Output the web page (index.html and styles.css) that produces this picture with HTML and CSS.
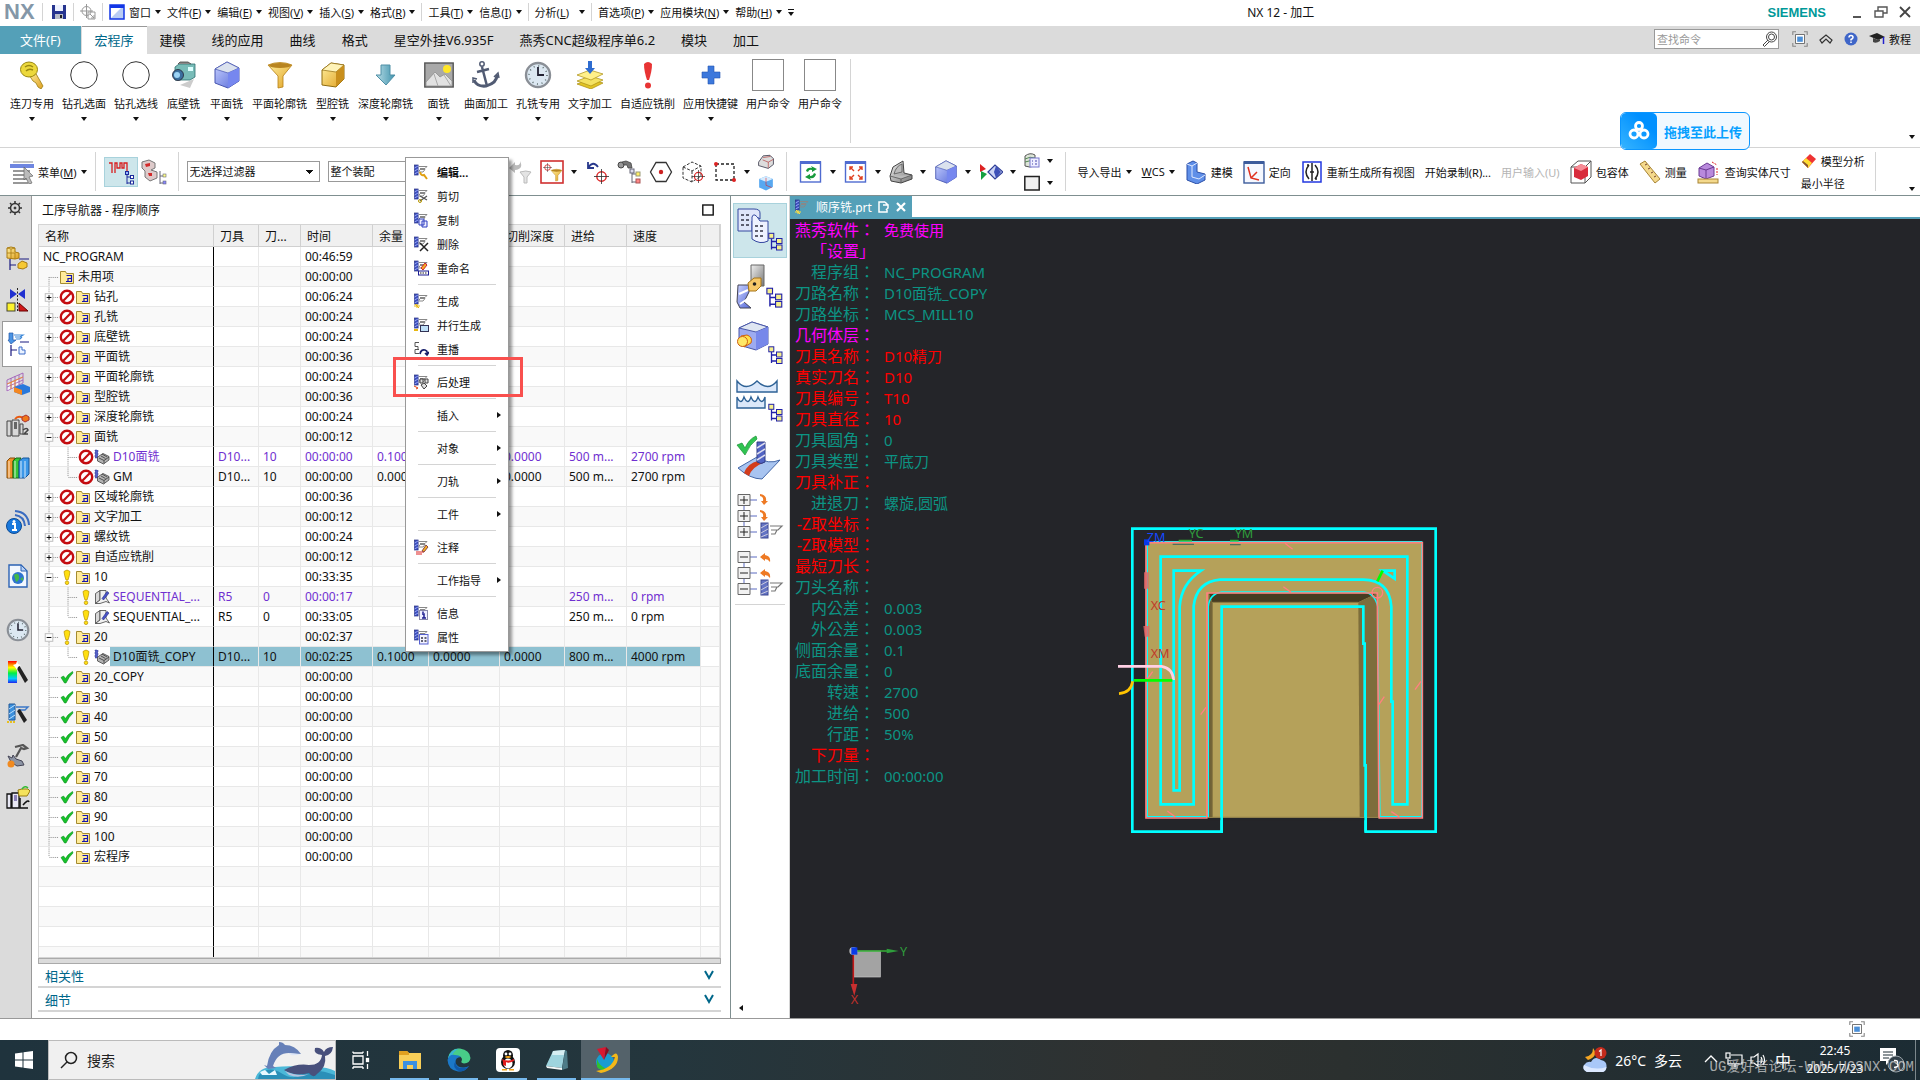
FILE: index.html
```html
<!DOCTYPE html>
<html lang="zh-CN">
<head>
  <meta charset="UTF-8">
  <meta name="viewport" content="width=device-width, initial-scale=1.0">
  <title>NX 12 - 加工</title>
  <link rel="stylesheet" href="styles.css">
</head>
<body>

  <!-- shared icons -->
  <svg class="sprite" width="0" height="0" aria-hidden="true">
    <defs>
      <linearGradient id="gBlue" x1="0" y1="0" x2="1" y2="1"><stop offset="0" stop-color="#c9d2ff"/><stop offset="1" stop-color="#5468d8"/></linearGradient>
      <linearGradient id="gGold" x1="0" y1="0" x2="1" y2="1"><stop offset="0" stop-color="#fff0a0"/><stop offset="1" stop-color="#e0a020"/></linearGradient>
      <linearGradient id="gGray" x1="0" y1="0" x2="1" y2="1"><stop offset="0" stop-color="#f0f0f0"/><stop offset="1" stop-color="#777"/></linearGradient>
      <linearGradient id="gTeal" x1="0" y1="0" x2="1" y2="0"><stop offset="0" stop-color="#b8dce6"/><stop offset="1" stop-color="#3f93ad"/></linearGradient>
      <linearGradient id="gRain" x1="0" y1="0" x2="0" y2="1"><stop offset="0" stop-color="#f00"/><stop offset=".3" stop-color="#ff0"/><stop offset=".55" stop-color="#0e4"/><stop offset=".8" stop-color="#0cf"/><stop offset="1" stop-color="#22e"/></linearGradient>
    </defs>

    <!-- tree guides -->
    <symbol id="g-plus" viewBox="0 0 20 20"><path d="M9.5 0V6M9.5 15V20M14 10.500H19" class="dots"/><rect x="5.500" y="6.500" width="8" height="8" class="box"/><path d="M7 10.500H12M9.500 8V13" class="sign"/></symbol>
    <symbol id="g-minus" viewBox="0 0 20 20"><path d="M9.5 0V6M9.5 15V20M14 10.500H19" class="dots"/><rect x="5.500" y="6.500" width="8" height="8" class="box"/><path d="M7 10.500H12" class="sign"/></symbol>
    <symbol id="g-tee" viewBox="0 0 20 20"><path d="M9.5 0V20M10 10.500H19" class="dots"/></symbol>
    <symbol id="g-first" viewBox="0 0 20 20"><path d="M9.5 10V20M10 10.500H19" class="dots"/></symbol>
    <symbol id="g-end" viewBox="0 0 20 20"><path d="M9.5 0V10M10 10.500H19" class="dots"/></symbol>
    <symbol id="g-pass" viewBox="0 0 20 20"><path d="M9.5 0V20" class="dots"/></symbol>

    <!-- tree status and nodes -->
    <symbol id="no" viewBox="0 0 16 16"><circle cx="8" cy="8" r="6.200" fill="#fff" stroke="#c40c10" stroke-width="2.400"/><path d="M3.800 12.200L12.200 3.800" stroke="#c40c10" stroke-width="2.200"/></symbol>
    <symbol id="warn" viewBox="0 0 16 16"><path d="M5 2.500Q8 -.5 11 2.500Q10.500 7 9 11H7Q5.500 7 5 2.500Z" fill="#ffdf10" stroke="#b89000" stroke-width=".7"/><circle cx="8" cy="13.800" r="1.800" fill="#ffdf10" stroke="#b89000" stroke-width=".7"/></symbol>
    <symbol id="ok" viewBox="0 0 16 16"><path d="M2 8.500L4.500 7L6.500 9.500Q9 5 13.500 2.500L14 4Q10 7.500 7 14H5.500Z" fill="#17c22c" stroke="#0c8d1c" stroke-width=".6"/></symbol>
    <symbol id="folder" viewBox="0 0 16 16"><path d="M1.500 14.500V2.500H6.500L7.500 4.500H14.500V14.500Z" fill="#ffeb9a" stroke="#a48b30"/><path d="M7.500 6.500H12.500V9.500H9V12.500M12.500 9V12.500H7" fill="none" stroke="#1414b4" stroke-width="1.200"/></symbol>
    <symbol id="opface" viewBox="0 0 16 16"><path d="M1 1H4V9H1Z" fill="#5560c4" stroke="#333a90" stroke-width=".5" stroke-dasharray="2 1"/><path d="M3.500 8L9 4.500L15 7.500V11L9.500 15L3.500 12Z" fill="#b4b4b4" stroke="#444" stroke-width=".8"/><path d="M5 9L10 11.500L15 8M7 7L11.500 9.500M10 11.500V14.500M8 5L13 8" fill="none" stroke="#444" stroke-width=".9"/></symbol>
    <symbol id="opseq" viewBox="0 0 16 16"><path d="M1.500 4.500L6 1.500V11L1.500 14.500Z" fill="#d8d8d8" stroke="#444" stroke-width=".8"/><path d="M6 1.500H12V9L15.500 14L12 12.500L6 14.500H1.500L6 11Z" fill="#f0f0f0" stroke="#444" stroke-width=".8"/><path d="M8 9.500L13 2.500L15 4L9.500 11Z" fill="#4a55c8" stroke="#1e2780" stroke-width=".6"/></symbol>

    <!-- mill tool base used across operation icons -->
    <symbol id="mill" viewBox="0 0 16 16"><rect x="1.500" y="1" width="3.600" height="10" fill="#3d50c0" stroke="#262f80" stroke-width=".7"/><path d="M1.500 4L5 2M1.500 7L5 5M1.500 10L5 8" stroke="#aab6ff" stroke-width=".8"/><path d="M6 2.500H14L12 4.500H7M6 7.500L7 5.500H12L10 8H6" fill="none" stroke="#888"/></symbol>
    <symbol id="nodes" viewBox="0 0 16 18"><path d="M3.500 6V17M3.500 9H8M3.500 15H8" fill="none" stroke="#2222a8" stroke-width="1.300"/><rect x=".8" y=".8" width="5" height="5" class="node"/><rect x="8.500" y="6" width="5.500" height="5" class="node"/><rect x="8.500" y="12.500" width="5.500" height="5" class="node"/></symbol>

    <!-- cubes and common shapes -->
    <symbol id="cube-blue" viewBox="0 0 28 28"><path d="M2 8L14 1L26 7V20L15 27L2 22Z" fill="url(#gBlue)" stroke="#4655b0"/><path d="M2 8L15 12L26 7L14 1Z" fill="#dbe2ee" stroke="#4655b0" stroke-width=".7"/><path d="M15 12V27L26 20V7Z" fill="#7687ef"/></symbol>
    <symbol id="cube-gold" viewBox="0 0 28 28"><path d="M3 9L12 2L25 4V18L17 26L3 24Z" fill="url(#gGold)" stroke="#8f6c10"/><path d="M3 9L12 2L25 4L17 11Z" fill="#fff3b8" stroke="#8f6c10" stroke-width=".7"/><path d="M17 11V26L25 18V4Z" fill="#c98f1c"/></symbol>
    <symbol id="clock" viewBox="0 0 28 28"><circle cx="14" cy="14" r="12" fill="#dce8f2" stroke="#8a8f96" stroke-width="2.400"/><circle cx="14" cy="14" r="9" fill="none" stroke="#566" stroke-dasharray="1 3.710" stroke-width="1.500"/><path d="M14 6V14H20" fill="none" stroke="#223" stroke-width="1.800"/></symbol>
    <symbol id="target" viewBox="0 0 16 16"><circle cx="8" cy="8" r="5" fill="none" stroke="#d22" stroke-width="1.500"/><path d="M8 0V16M0 8H16" stroke="#333" stroke-width=".9"/></symbol>
    <symbol id="funnel" viewBox="0 0 28 28"><path d="M2 4Q14 -1 26 4L17 15V26L12 27V15Z" fill="url(#gGold)" stroke="#b57d12" stroke-width=".8"/><ellipse cx="14" cy="4.500" rx="11" ry="2.500" fill="#b88420"/></symbol>
    <symbol id="fit" viewBox="0 0 20 20"><path d="M1 5V1H5M15 1H19V5M19 15V19H15M5 19H1V15" fill="none" stroke="#888" stroke-width="1.400"/><rect x="4.500" y="4.500" width="11" height="11" fill="#fff" stroke="#555"/><rect x="6.500" y="7" width="7" height="6.500" fill="#4b8fd8"/></symbol>
  </svg>

  <header class="titlebar">
    <span class="nx-logo">NX</span>
    <span class="sep"></span>
    <button class="plain" aria-label="保存"><svg width="16" height="16" viewBox="0 0 16 16"><path d="M1 1H15V15H1Z" fill="#26348f"/><rect x="4" y="1" width="8" height="6" fill="#eef2ff"/><rect x="4" y="10" width="8" height="5" fill="#b7bcc8"/><rect x="9" y="11" width="2" height="3" fill="#222"/></svg></button>
    <span class="sep"></span>
    <button class="plain" aria-label="选择"><svg width="16" height="16" viewBox="0 0 16 16" fill="none" stroke="#999"><circle cx="6.500" cy="7" r="4.500"/><path d="M6.500 0V14M0 7H13M8 8H15V15H8ZM10 10L14 14M14 11V14H11"/></svg></button>
    <span class="sep"></span>
    <button class="menu-btn"><svg width="16" height="16" viewBox="0 0 16 16"><rect x="1" y="1" width="14" height="14" fill="#b9ccf4" stroke="#1236e6" stroke-width="1.500"/><rect x="1" y="1" width="14" height="3" fill="#1236e6"/><path d="M2 4H12L2 14Z" fill="#fff"/></svg>窗口<i class="caret"></i></button>
    <button class="menu-btn"><span>文件(<u>F</u>)</span><i class="caret"></i></button>
    <button class="menu-btn"><span>编辑(<u>E</u>)</span><i class="caret"></i></button>
    <button class="menu-btn"><span>视图(<u>V</u>)</span><i class="caret"></i></button>
    <button class="menu-btn"><span>插入(<u>S</u>)</span><i class="caret"></i></button>
    <button class="menu-btn"><span>格式(<u>R</u>)</span><i class="caret"></i></button>
    <span class="sep"></span>
    <button class="menu-btn"><span>工具(<u>T</u>)</span><i class="caret"></i></button>
    <button class="menu-btn"><span>信息(<u>I</u>)</span><i class="caret"></i></button>
    <span class="sep"></span>
    <button class="menu-btn wide"><span>分析(<u>L</u>)</span><i class="caret"></i></button>
    <span class="sep"></span>
    <button class="menu-btn"><span>首选项(<u>P</u>)</span><i class="caret"></i></button>
    <button class="menu-btn"><span>应用模块(<u>N</u>)</span><i class="caret"></i></button>
    <button class="menu-btn"><span>帮助(<u>H</u>)</span><i class="caret"></i></button>
    <button class="plain more" aria-label="更多"><i class="bar"></i><i class="caret"></i></button>
    <h1 class="app-title">NX 12 - 加工</h1>
    <span class="brand">SIEMENS</span>
    <div class="win-btns">
      <button class="plain" aria-label="最小化"><svg width="14" height="14" viewBox="0 0 14 14"><path d="M3 12H11" stroke="#555" stroke-width="2"/></svg></button>
      <button class="plain" aria-label="还原"><svg width="14" height="14" viewBox="0 0 14 14" fill="none" stroke="#555" stroke-width="1.400"><path d="M1 6H9V12H1ZM4 6V2H13V8H9"/></svg></button>
      <button class="plain" aria-label="关闭"><svg width="14" height="14" viewBox="0 0 14 14"><path d="M2 2L12 12M12 2L2 12" stroke="#444" stroke-width="1.800"/></svg></button>
    </div>
  </header>

  <nav class="tabs">
    <button class="tab file">文件(F)</button>
    <button class="tab active">宏程序</button>
    <button class="tab">建模</button>
    <button class="tab">线的应用</button>
    <button class="tab">曲线</button>
    <button class="tab">格式</button>
    <button class="tab">星空外挂V6.935F</button>
    <button class="tab">燕秀CNC超级程序单6.2</button>
    <button class="tab">模块</button>
    <button class="tab">加工</button>
    <div class="tab-tools">
      <label class="finder">
        <input type="text" placeholder="查找命令" aria-label="查找命令">
        <svg width="16" height="16" viewBox="0 0 16 16" fill="none" stroke="#444"><circle cx="9.500" cy="6" r="5"/><circle cx="9.500" cy="6" r="3"/><path d="M6 9L1 14L2.500 15.500L7.500 10.500"/></svg>
      </label>
      <button class="plain" aria-label="全屏"><svg width="16" height="16"><use href="#fit"/></svg></button>
      <button class="plain" aria-label="最小化功能区"><svg width="14" height="14" viewBox="0 0 14 14" fill="none" stroke="#333" stroke-width="1.200"><path d="M1 8L7 3L13 8L11 11L7 7L3 11Z"/></svg></button>
      <button class="plain" aria-label="帮助"><svg width="14" height="14" viewBox="0 0 14 14"><circle cx="7" cy="7" r="6.500" fill="#3f66c8"/><path d="M5 5.500Q5 3.500 7 3.500T9 5.500Q9 6.500 7 7.500V8.500M7 9.500V11" fill="none" stroke="#fff" stroke-width="1.500"/></svg></button>
      <button class="plain tutorial"><svg width="16" height="14" viewBox="0 0 16 14"><path d="M0 4L8 1L16 5L9 8Z" fill="#222"/><path d="M4 6V10Q7 12 11 9V7L9 8Z" fill="#444"/><path d="M14.500 5V12" stroke="#22c" stroke-width="1.500"/></svg>教程</button>
    </div>
  </nav>

  <section class="ribbon">
    <button class="cmd"><svg viewBox="0 0 28 28"><path d="M11 14L17 11L25 25L23 28L20 26L18 22L15 20Z" fill="url(#gGold)" stroke="#9a7d10" stroke-width=".8"/><ellipse cx="11" cy="8.500" rx="8.500" ry="7.500" fill="#ecd83c" stroke="#9a8810"/><path d="M7 6Q11 3 15 6M8 10Q11 7 15 9" fill="none" stroke="#9a8810" stroke-width="1.500"/></svg>连刀专用<i class="caret"></i></button>
    <button class="cmd"><svg viewBox="0 0 28 28"><circle cx="14" cy="14" r="13.300" fill="#fff" stroke="#333"/></svg>钻孔选面<i class="caret"></i></button>
    <button class="cmd"><svg viewBox="0 0 28 28"><circle cx="14" cy="14" r="13.300" fill="#fff" stroke="#333"/></svg>钻孔选线<i class="caret"></i></button>
    <button class="cmd"><svg viewBox="0 0 28 28"><path d="M10 24L24 18L20 27Z" fill="#ccc"/><path d="M5 6L9 3H25V16L20 19H5Z" fill="#78bcb8" stroke="#2d6f70" stroke-width=".8"/><path d="M8 3L10 1H18L21 3" fill="#888" stroke="#444" stroke-width=".8"/><circle cx="8" cy="14" r="5.500" fill="#3b6f9e" stroke="#223" stroke-width=".8"/><circle cx="7" cy="14" r="3" fill="#9cd3f5"/><rect x="18" y="6" width="5" height="4" fill="#dff"/></svg>底壁铣<i class="caret"></i></button>
    <button class="cmd"><svg><use href="#cube-blue"/></svg>平面铣<i class="caret"></i></button>
    <button class="cmd"><svg><use href="#funnel"/></svg>平面轮廓铣<i class="caret"></i></button>
    <button class="cmd"><svg><use href="#cube-gold"/></svg>型腔铣<i class="caret"></i></button>
    <button class="cmd"><svg viewBox="0 0 28 28"><path d="M9 4H18V14H23L14 24L4 14H9Z" fill="url(#gTeal)" stroke="#4f8fa6"/></svg>深度轮廓铣<i class="caret"></i></button>
    <button class="cmd"><svg class="pic" viewBox="0 0 30 28"><rect x=".8" y="2" width="28.400" height="24" fill="#a9a9a9" stroke="#555" stroke-width="1.400"/><circle cx="23" cy="8" r="4" fill="#ffe628"/><path d="M2 25V21L11 11L16 16L21 13L28 20V25Z" fill="#e2e2e2" stroke="#888" stroke-width=".7"/><path d="M10 13L14 25M20 14L27 25" stroke="#aaa"/></svg>面铣<i class="caret"></i></button>
    <button class="cmd"><svg viewBox="0 0 28 28" fill="none" stroke="#515b73"><circle cx="10" cy="3" r="2.200" stroke-width="1.500"/><path d="M10 6L15 25M5 11L17 8" stroke-width="2.500"/><path d="M2 19Q5 26 14 25Q25 22 25 14" stroke-width="3"/><path d="M1 22V17L5 18M22 16L26 12L27 17" stroke-width="1.500"/></svg>曲面加工<i class="caret"></i></button>
    <button class="cmd"><svg><use href="#clock"/></svg>孔铣专用<i class="caret"></i></button>
    <button class="cmd"><svg viewBox="0 0 28 28"><path d="M1 23L14 18L27 22L15 28Z" fill="#e2c425" stroke="#a98c10" stroke-width=".7"/><path d="M1 20L14 15L27 19L15 25Z" fill="#f4e263" stroke="#a98c10" stroke-width=".7"/><path d="M1 14L14 9L27 13L15 19Z" fill="#fff08a" stroke="#a98c10" stroke-width=".7"/><path d="M12 0H16V7H19L14 13L9 7H12Z" fill="#2e6cd0"/></svg>文字加工<i class="caret"></i></button>
    <button class="cmd"><svg viewBox="0 0 28 28"><path d="M10 3Q14 -1 18 3Q18 10 15 19H13Q10 10 10 3Z" fill="#e83434"/><circle cx="14" cy="24.500" r="3" fill="#e83434"/></svg>自适应铣削<i class="caret"></i></button>
    <button class="cmd"><svg viewBox="0 0 28 28"><path d="M11 5H17V11H23V17H17V23H11V17H5V11H11Z" fill="#3c78dc" stroke="#2456b4" stroke-width=".6"/></svg>应用快捷键<i class="caret"></i></button>
    <button class="cmd user"><span class="blank"></span>用户命令</button>
    <button class="cmd user"><span class="blank"></span>用户命令</button>
    <span class="sep"></span>
    <i class="caret corner"></i>
  </section>

  <section class="toolbar">
    <button class="text-btn menu-main"><svg width="24" height="24" viewBox="0 0 24 24"><path d="M3 2H23" stroke="#888"/><rect x="0" y="4" width="24" height="4" fill="#6f86e0"/><path d="M3 11H20M3 15H18M3 19H18M3 23H18" stroke="#777" stroke-width="1.300"/><path d="M14 7L23 16L19 17L22 23L19 24L16 18L14 20Z" fill="#bbb" stroke="#666" stroke-width=".7"/></svg><span>菜单(<u>M</u>)</span><i class="caret"></i></button>
    <span class="sep"></span>
    <button class="plain toggle on" aria-label="程序顺序视图"><svg width="28" height="26" viewBox="0 0 28 26"><path d="M2 4H5V14M8 14V4H10V9H13V4H15V9H17V4H20V13" fill="none" stroke="#d81e1e" stroke-width="1.300"/><path d="M20 14V25M20 18H24M20 24H24" stroke="#1c2a9c" fill="none"/><rect x="18.500" y="12.500" width="3" height="3" fill="#9bf" stroke="#1c2a9c"/><rect x="23.500" y="16.500" width="3" height="3" fill="#fff" stroke="#1c2a9c"/><rect x="23.500" y="22" width="3" height="3" fill="#fff" stroke="#1c2a9c"/></svg></button>
    <button class="plain toggle" aria-label="几何视图"><svg width="26" height="26" viewBox="0 0 26 26"><path d="M1 3L8 1L14 4V9L10 11L16 13V19L9 22L4 18V12L1 9Z" fill="#ddcaca" stroke="#777"/><path d="M4 5L9 4V7L5 8Z" fill="#d22b2b"/><path d="M7 14L11 14V17L8 17Z" fill="#d22b2b"/><path d="M19 12V25M19 17H24M19 24H24" stroke="#667" fill="none"/><rect x="22" y="15" width="3" height="3" fill="#ff8" stroke="#667" stroke-width=".6"/><rect x="22" y="22" width="3" height="3" fill="#88f" stroke="#667" stroke-width=".6"/></svg></button>
    <span class="sep"></span>
    <select class="filter" aria-label="选择过滤器"><option>无选择过滤器</option></select>
    <select class="scope" aria-label="选择范围"><option>整个装配</option></select>
    <button class="plain" aria-label="重置过滤器" disabled><svg width="24" height="24" viewBox="0 0 24 24"><path d="M1 8L7 2V5Q13 6 12 1Q16 9 7 10V13Z" fill="#bbb"/><path d="M12 12Q18 10 23 12L19 17V23H16V17Z" fill="#e4e4e4" stroke="#bbb"/></svg></button>
    <span class="split"><button class="plain" aria-label="过滤器"><svg width="24" height="24" viewBox="0 0 24 24"><rect x="1" y="1" width="22" height="22" fill="#fff" stroke="#d03030" stroke-width="1.600"/><svg x="3" y="3" width="9" height="9"><use href="#target"/></svg><svg x="10" y="8" width="13" height="14"><use href="#funnel"/></svg></svg></button><i class="caret"></i></span>
    <button class="plain" aria-label="捕捉点"><svg width="24" height="24" viewBox="0 0 24 24"><path d="M3 2V8H9M3 8Q8 0 13 7" fill="none" stroke="#28388c" stroke-width="1.800"/><svg x="9" y="9" width="15" height="15"><use href="#target"/></svg></svg></button>
    <button class="plain" aria-label="查找对象"><svg width="24" height="24" viewBox="0 0 24 24"><circle cx="4" cy="5" r="3" fill="#999" stroke="#444"/><path d="M5 2L9 1L14 3L15 8L11 8L10 5L7 5Z" fill="#777" stroke="#444" stroke-width=".8"/><path d="M15 9V23M15 14H20M15 22H20" stroke="#667" fill="none"/><rect x="13" y="9" width="4" height="4" fill="#dde" stroke="#667"/><rect x="19" y="12" width="4" height="4" fill="#fe6" stroke="#997"/><rect x="19" y="19" width="4" height="4" fill="#f88" stroke="#a55"/></svg></button>
    <button class="plain" aria-label="点"><svg width="24" height="24" viewBox="0 0 24 24"><path d="M7 2.500H17L22.500 12L17 21.500H7L1.500 12Z" fill="#fff" stroke="#333" stroke-width="1.300"/><circle cx="12" cy="12" r="2.200" fill="#c22"/></svg></button>
    <button class="plain" aria-label="体捕捉"><svg width="24" height="24" viewBox="0 0 24 24"><path d="M2 7L11 2L20 6V16L11 22L2 18ZM2 7L11 11L20 6M11 11V22" fill="none" stroke="#333" stroke-dasharray="3 1.500"/><svg x="11" y="10" width="13" height="13"><use href="#target"/></svg></svg></button>
    <span class="split"><button class="plain" aria-label="框选"><svg width="24" height="24" viewBox="0 0 24 24"><rect x="3" y="4" width="18" height="16" fill="none" stroke="#222" stroke-width="1.300" stroke-dasharray="3 2"/><circle cx="3" cy="4" r="2" fill="#d22"/><circle cx="21" cy="20" r="2" fill="#d22"/></svg></button><i class="caret"></i></span>
    <span class="stack"><svg width="16" height="16" viewBox="0 0 28 28"><path d="M1 16L9 5L21 4L27 10V20L18 27L1 22Z" fill="#ddd" stroke="#445" stroke-width="1.500"/><path d="M9 8L22 6M8 12L18 16V26M18 16L27 11" fill="none" stroke="#a22"/></svg><svg width="16" height="16" viewBox="0 0 28 28"><path d="M2 7L14 2L26 7V21L14 27L2 22Z" fill="#58a8f0"/><path d="M2 7L14 12L26 7L14 2Z" fill="#d6ecff"/><path d="M14 5V18L24 22" stroke="#d22" fill="none"/></svg></span>
    <span class="sep spaced"></span>
    <span class="split"><button class="plain" aria-label="刷新"><svg width="24" height="24" viewBox="0 0 24 24"><rect x="1.500" y="2" width="20" height="20" fill="#fff" stroke="#4f6bd0" stroke-width="1.400"/><rect x="1" y="1" width="21" height="3" fill="#4f6bd0"/><path d="M7 11Q8 7 13 8L12 6L18 9L13 12V10Q10 9 9 12ZM17 14Q16 19 11 18L12 20L6 17L11 14V16Q14 16 15 13Z" fill="#189a3c"/></svg></button><i class="caret"></i></span>
    <span class="split"><button class="plain" aria-label="适合窗口"><svg width="24" height="24" viewBox="0 0 24 24"><rect x="1.500" y="2" width="20" height="20" fill="#fff" stroke="#4f6bd0" stroke-width="1.400"/><rect x="1" y="1" width="21" height="3" fill="#4f6bd0"/><path d="M10 11L6 7M6 10V7H9M14 11L18 7M15 7H18V10M10 15L6 19M6 16V19H9M14 15L18 19M15 19H18V16" fill="none" stroke="#e04020" stroke-width="1.400"/></svg></button><i class="caret"></i></span>
    <span class="split"><button class="plain" aria-label="编辑截面"><svg width="24" height="24" viewBox="0 0 24 24"><path d="M1 16L4 7L14 1L15 13L23 15V19L12 23L2 21Z" fill="url(#gGray)" stroke="#444"/><path d="M1 16L12 19L23 15M12 19V23M5 14Q7 6 13 4L13 12Z" fill="#bbb" stroke="#555" stroke-width=".8"/></svg></button><i class="caret"></i></span>
    <span class="split"><button class="plain" aria-label="着色"><svg width="24" height="24"><use href="#cube-blue"/></svg></button><i class="caret"></i></span>
    <span class="split"><button class="plain" aria-label="定向视图"><svg width="24" height="24" viewBox="0 0 24 24"><path d="M1 4L7 9L1 12Z" fill="#d22"/><path d="M2 11L8 14L2 20Z" fill="#15a040"/><path d="M9 12L16 5L24 12L16 19Z" fill="#ccd4f4" stroke="#2f3f98" stroke-width="1.200"/><path d="M17 6L22 12L17 18L15 12Z" fill="#3d50b8"/></svg></button><i class="caret"></i></span>
    <span class="stack">
      <span class="split"><svg width="16" height="16" viewBox="0 0 16 16"><path d="M1 3Q6 -1 11 2V13Q5 15 1 13Z" fill="#dde5d8" stroke="#555"/><path d="M1 6Q6 3 11 5M1 9Q6 7 11 8" stroke="#585" fill="none"/><rect x="6" y="5" width="9" height="9" fill="#eef" stroke="#77c"/><path d="M8 8H9M11 8H13M8 11H9M11 11H13" stroke="#44a"/></svg><i class="caret"></i></span>
      <span class="split"><svg width="16" height="16" viewBox="0 0 16 16"><rect x=".8" y="1.500" width="14.400" height="13.500" fill="#f0f0f0" stroke="#222" stroke-width="1.500"/></svg><i class="caret"></i></span>
    </span>
    <span class="sep spaced"></span>
    <div class="text-tools">
      <button class="text-btn">导入导出<i class="caret"></i></button>
      <button class="text-btn"><span><u>W</u>CS</span><i class="caret"></i></button>
      <button class="text-btn"><svg width="22" height="24" viewBox="0 0 22 24"><path d="M2 4L8 1L12 3V12L20 14V20L12 24L2 20Z" fill="#5f8fe8" stroke="#2b4fa8"/><path d="M2 4L7 6V17L14 19L20 15M7 6L12 3" fill="none" stroke="#dfe9ff"/></svg>建模</button>
      <button class="text-btn"><svg width="22" height="24" viewBox="0 0 22 24"><rect x="1" y="2" width="20" height="21" fill="#f5f8ff" stroke="#3c5c9c" stroke-width="1.400"/><rect x="1" y="1" width="20" height="3" fill="#3c5c9c"/><path d="M5 7L8 18L16 20M8 18L14 12" fill="none" stroke="#e03020" stroke-width="1.500"/></svg>定向</button>
      <button class="text-btn"><svg width="22" height="24" viewBox="0 0 22 24"><rect x="2" y="2" width="18" height="20" fill="#fff" stroke="#2338e0" stroke-width="1.500"/><path d="M8 5Q2 12 8 19M14 5Q20 12 14 19M11 3V21M8 5L6 5M14 19L16 19M9 12H13" fill="none" stroke="#222" stroke-width="1.500"/></svg>重新生成所有视图</button>
      <button class="text-btn">开始录制(R)...</button>
      <button class="text-btn" disabled>用户输入(U)</button>
      <button class="text-btn"><svg width="22" height="24" viewBox="0 0 22 24"><path d="M1 7L8 1H21V17L15 23H1ZM1 7H15V23M15 7L21 1" fill="none" stroke="#555"/><path d="M4 8L11 4L18 7V16L11 20L4 17Z" fill="#d82c3c"/><path d="M4 8L11 11L18 7L11 4Z" fill="#f68c96"/></svg>包容体</button>
      <button class="text-btn"><svg width="22" height="24" viewBox="0 0 22 24"><path d="M1 4L6 1L21 19L16 23Z" fill="#f4d98c" stroke="#a88434"/><path d="M6 5L8 4M9 9L11 8M12 13L14 12M15 17L17 16" stroke="#743"/></svg>测量</button>
      <button class="text-btn"><svg width="24" height="24" viewBox="0 0 24 24"><path d="M2 8L10 3L17 7V16L9 19L2 16Z" fill="#b889dc" stroke="#6b3a94"/><path d="M2 8L9 10L17 7M9 10V19" fill="none" stroke="#6b3a94"/><rect x="1" y="19" width="20" height="4" fill="#f4d98c" stroke="#a88434"/><path d="M15 2L20 5M20 8V15" stroke="#d22" stroke-dasharray="2 1"/></svg>查询实体尺寸</button>
      <div class="stack lines">
        <button class="text-btn"><svg width="16" height="16" viewBox="0 0 16 16"><path d="M1 9L9 1L15 6L7 15Z" fill="#e33"/><path d="M1 9L5 5L11 10L7 15Z" fill="#fd3"/><path d="M1 9L7 15V12L2 8Z" fill="#853"/></svg>模型分析</button>
        <button class="text-btn">最小半径</button>
      </div>
      <span class="sep"></span>
    </div>
    <i class="caret corner"></i>
  </section>

  <main class="workspace">
    <aside class="resource-bar">
      <button class="plain gear" aria-label="设置"><svg width="16" height="16" viewBox="0 0 16 16" fill="none" stroke="#333"><circle cx="8" cy="8" r="4.500" stroke-width="1.500"/><circle cx="8" cy="8" r="1" fill="#333"/><path d="M8 1V3M8 13V15M1 8H3M13 8H15M3 3L4.500 4.500M11.500 11.500L13 13M3 13L4.500 11.500M11.500 4.500L13 3" stroke-width="1.500"/></svg></button>
      <button class="res" aria-label="装配导航器"><svg viewBox="0 0 24 24"><path d="M1 2L5 1L9 2V6L13 7V12L9 13L1 12Z" fill="url(#gGold)" stroke="#a87a10"/><path d="M1 7H9V13M1 2L5 3L9 2M5 3V12" fill="none" stroke="#a87a10" stroke-width=".8"/><path d="M4 13V24M4 19H10M13 13H23" stroke="#1a1a80" stroke-width="1.200"/><path d="M12 18L16 15L21 17V21L17 23L12 22Z" fill="#f6c832" stroke="#a87a10"/></svg></button>
      <button class="res" aria-label="约束导航器"><svg viewBox="0 0 24 24"><path d="M4 1L11 6L4 11ZM19 1L12 6L19 11Z" fill="#2030d0"/><path d="M11.500 0V24" stroke="#222" stroke-dasharray="2 1.500"/><rect x="1" y="15" width="8" height="8" fill="#fdf32c" stroke="#443"/><path d="M13 15L22 23H13Z" fill="#d01818" stroke="#600"/></svg></button>
      <button class="res current" aria-label="工序导航器"><svg viewBox="0 0 24 24"><path d="M2 1H6V8H9L4 12L1 8H2Z" fill="#4a94e4" stroke="#2458a8" stroke-width=".7"/><path d="M7 3H16L13 5H8M9 7H13L15 5" fill="none" stroke="#3c88d8" stroke-width="1.200"/><path d="M4 13V24M4 18H10M13 10H22" stroke="#1a1a80" stroke-width="1.200"/><path d="M12 15H15V18H18V22H12Z" fill="#eaf2ff" stroke="#3c6cc8"/></svg></button>
      <button class="res" aria-label="加工特征导航器"><svg viewBox="0 0 24 24"><path d="M1 12L13 7V14L1 20Z" fill="#fff" opacity=".7"/><path d="M1 8L17 1V11L1 19ZM1 12L17 5M1 15L17 8M5 6V17M9 4V15M13 3V13" fill="none" stroke="#a060b8" stroke-width=".9"/><path d="M1 12L17 5M5 10V17M9 8V15" stroke="#f39030" stroke-width=".9"/><path d="M8 15L17 12L24 15V20L16 23L8 20Z" fill="#2878dc"/><path d="M8 15L16 18V23L8 20Z" fill="#f38720"/></svg></button>
      <button class="res" aria-label="机床导航器"><svg viewBox="0 0 24 24"><path d="M1 7H5V22H1ZM6 6H13V22H6ZM14 10H17V20H14Z" fill="#d8d8d8" stroke="#444"/><path d="M8 8H11V15H8Z" fill="#666"/><path d="M9 5Q12 1 17 4" stroke="#e85a10" fill="none" stroke-width="2"/><path d="M16 3L20 1L23 3V6L19 8L16 6Z" fill="#f07818" stroke="#a33"/><path d="M17 16Q21 13 22 16L18 20H22" fill="none" stroke="#444" stroke-width="1.500"/></svg></button>
      <button class="res" aria-label="重用库"><svg viewBox="0 0 24 24"><path d="M1 5L4 2H9L7 5V22H1Z" fill="#f0922a" stroke="#854c08"/><path d="M7 5L10 2H15L13 5V22H7Z" fill="#37c637" stroke="#146a14"/><path d="M13 5L17 2H23V18L19 22H13Z" fill="#3b97e8" stroke="#15559a"/><path d="M3 5V22M9 5V22M15 5V22M19 5V22" stroke="#fff" stroke-width=".8"/></svg></button>
      <button class="res far" aria-label="HD3D 工具"><svg viewBox="0 0 24 24"><circle cx="8" cy="16" r="7.500" fill="#1878dc" stroke="#0c4a94"/><path d="M6 14H9V20M6 20H11" stroke="#fff" stroke-width="2" fill="none"/><circle cx="8" cy="11.500" r="1.500" fill="#fff"/><path d="M9 5Q18 6 19 16M9 1Q22 2 23 15" fill="none" stroke="#3a6cc0" stroke-width="2"/></svg></button>
      <button class="res far" aria-label="Web 浏览器"><svg viewBox="0 0 24 24"><path d="M3 1H15L21 7V23H3Z" fill="#f2f7ff" stroke="#2b62b4" stroke-width="1.400"/><path d="M15 1V7H21Z" fill="#b8d0f4" stroke="#2b62b4"/><circle cx="12" cy="14" r="6" fill="#2e74d0"/><path d="M8 11Q12 8 13 12T10 18ZM14 15L17 13V17Z" fill="#43b84a"/></svg></button>
      <button class="res far" aria-label="历史记录"><svg><use href="#clock"/></svg></button>
      <button class="res" aria-label="系统材料"><svg viewBox="0 0 24 24"><rect x="2" y="1" width="9" height="22" fill="url(#gRain)"/><path d="M10 7L13 5L22 20L19 23Z" fill="#222"/><path d="M11 1L12 4L15 5L12 7L11 10L9 7L7 5L10 4Z" fill="#fff"/></svg></button>
      <button class="res" aria-label="加工向导"><svg viewBox="0 0 24 24"><path d="M3 2H9V18H3Z" fill="#3c90dc" stroke="#205898"/><path d="M3 7L9 3M3 12L9 8M3 17L9 13" stroke="#bfe0ff"/><path d="M10 5H22L19 8H12" fill="none" stroke="#3c78c8" stroke-width="1.400"/><path d="M11 9L14 7L21 18L18 21Z" fill="#222"/><path d="M1 20H10" stroke="#e8c020" stroke-width="2" stroke-dasharray="2 1"/></svg></button>
      <button class="res" aria-label="角色"><svg viewBox="0 0 24 24"><path d="M9 3L17 1L21 4L18 5L15 4L10 13" fill="none" stroke="#555" stroke-width="2.200"/><path d="M2 12L6 14L7 11L10 15L16 17L18 21L11 22L5 18Z" fill="#8c94a4" stroke="#445"/><circle cx="5" cy="20" r="3.500" fill="#f08a20"/></svg></button>
      <button class="res" aria-label="机床文件"><svg viewBox="0 0 24 24"><path d="M1 8H5V22H1ZM6 7H13V22H6Z" fill="#e8e8f4" stroke="#111" stroke-width="1.300"/><path d="M8 9H11V15H8Z" fill="#8a80b8"/><path d="M14 12V22H22M17 19Q22 13 23 16" fill="none" stroke="#111" stroke-width="1.500"/><path d="M12 4L16 3H22L24 5L21 10H13Z" fill="#f4e25c" stroke="#997c10"/><path d="M16 3Q19 -1 22 2" stroke="#3b3" fill="none" stroke-width="1.500"/></svg></button>
    </aside>

    <section class="navigator">
      <div class="nav-head">
        <h2>工序导航器 - 程序顺序</h2>
        <button class="plain" aria-label="最大化"><svg width="12" height="12" viewBox="0 0 12 12"><rect x=".8" y="1" width="10.400" height="10" fill="none" stroke="#111" stroke-width="1.400"/></svg></button>
      </div>
      <div class="table-wrap">
        <table class="ops">
          <colgroup><col class="c-name"><col class="c-tool"><col class="c-num"><col class="c-time"><col class="c-stock"><col class="c-floor"><col class="c-depth"><col class="c-feed"><col class="c-speed"><col></colgroup>
          <thead>
            <tr><th>名称</th><th>刀具</th><th>刀...</th><th>时间</th><th>余量</th><th></th><th>切削深度</th><th>进给</th><th>速度</th><th></th></tr>
          </thead>
          <tbody>
            <tr><td class="root">NC_PROGRAM</td><td></td><td></td><td>00:46:59</td><td></td><td></td><td></td><td></td><td></td><td></td></tr>
            <tr><td><div class="node-row"><svg><use href="#g-first"/></svg><svg class="ic"><use href="#folder"/></svg><span>未用项</span></div></td><td></td><td></td><td>00:00:00</td><td></td><td></td><td></td><td></td><td></td><td></td></tr>
            <tr><td><div class="node-row"><svg><use href="#g-plus"/></svg><svg class="ic"><use href="#no"/></svg><svg class="ic"><use href="#folder"/></svg><span>钻孔</span></div></td><td></td><td></td><td>00:06:24</td><td></td><td></td><td></td><td></td><td></td><td></td></tr>
            <tr><td><div class="node-row"><svg><use href="#g-plus"/></svg><svg class="ic"><use href="#no"/></svg><svg class="ic"><use href="#folder"/></svg><span>孔铣</span></div></td><td></td><td></td><td>00:00:24</td><td></td><td></td><td></td><td></td><td></td><td></td></tr>
            <tr><td><div class="node-row"><svg><use href="#g-plus"/></svg><svg class="ic"><use href="#no"/></svg><svg class="ic"><use href="#folder"/></svg><span>底壁铣</span></div></td><td></td><td></td><td>00:00:24</td><td></td><td></td><td></td><td></td><td></td><td></td></tr>
            <tr><td><div class="node-row"><svg><use href="#g-plus"/></svg><svg class="ic"><use href="#no"/></svg><svg class="ic"><use href="#folder"/></svg><span>平面铣</span></div></td><td></td><td></td><td>00:00:36</td><td></td><td></td><td></td><td></td><td></td><td></td></tr>
            <tr><td><div class="node-row"><svg><use href="#g-plus"/></svg><svg class="ic"><use href="#no"/></svg><svg class="ic"><use href="#folder"/></svg><span>平面轮廓铣</span></div></td><td></td><td></td><td>00:00:24</td><td></td><td></td><td></td><td></td><td></td><td></td></tr>
            <tr><td><div class="node-row"><svg><use href="#g-plus"/></svg><svg class="ic"><use href="#no"/></svg><svg class="ic"><use href="#folder"/></svg><span>型腔铣</span></div></td><td></td><td></td><td>00:00:36</td><td></td><td></td><td></td><td></td><td></td><td></td></tr>
            <tr><td><div class="node-row"><svg><use href="#g-plus"/></svg><svg class="ic"><use href="#no"/></svg><svg class="ic"><use href="#folder"/></svg><span>深度轮廓铣</span></div></td><td></td><td></td><td>00:00:24</td><td></td><td></td><td></td><td></td><td></td><td></td></tr>
            <tr><td><div class="node-row"><svg><use href="#g-minus"/></svg><svg class="ic"><use href="#no"/></svg><svg class="ic"><use href="#folder"/></svg><span>面铣</span></div></td><td></td><td></td><td>00:00:12</td><td></td><td></td><td></td><td></td><td></td><td></td></tr>
            <tr class="purple"><td><div class="node-row"><svg><use href="#g-pass"/></svg><svg><use href="#g-tee"/></svg><svg class="ic"><use href="#no"/></svg><svg class="ic"><use href="#opface"/></svg><span>D10面铣</span></div></td><td>D10...</td><td>10</td><td>00:00:00</td><td>0.1000</td><td>0.0000</td><td>0.0000</td><td>500 m...</td><td>2700 rpm</td><td></td></tr>
            <tr><td><div class="node-row"><svg><use href="#g-pass"/></svg><svg><use href="#g-end"/></svg><svg class="ic"><use href="#no"/></svg><svg class="ic"><use href="#opface"/></svg><span>GM</span></div></td><td>D10...</td><td>10</td><td>00:00:00</td><td>0.0000</td><td>0.0000</td><td>0.0000</td><td>500 m...</td><td>2700 rpm</td><td></td></tr>
            <tr><td><div class="node-row"><svg><use href="#g-plus"/></svg><svg class="ic"><use href="#no"/></svg><svg class="ic"><use href="#folder"/></svg><span>区域轮廓铣</span></div></td><td></td><td></td><td>00:00:36</td><td></td><td></td><td></td><td></td><td></td><td></td></tr>
            <tr><td><div class="node-row"><svg><use href="#g-plus"/></svg><svg class="ic"><use href="#no"/></svg><svg class="ic"><use href="#folder"/></svg><span>文字加工</span></div></td><td></td><td></td><td>00:00:12</td><td></td><td></td><td></td><td></td><td></td><td></td></tr>
            <tr><td><div class="node-row"><svg><use href="#g-plus"/></svg><svg class="ic"><use href="#no"/></svg><svg class="ic"><use href="#folder"/></svg><span>螺纹铣</span></div></td><td></td><td></td><td>00:00:24</td><td></td><td></td><td></td><td></td><td></td><td></td></tr>
            <tr><td><div class="node-row"><svg><use href="#g-plus"/></svg><svg class="ic"><use href="#no"/></svg><svg class="ic"><use href="#folder"/></svg><span>自适应铣削</span></div></td><td></td><td></td><td>00:00:12</td><td></td><td></td><td></td><td></td><td></td><td></td></tr>
            <tr><td><div class="node-row"><svg><use href="#g-minus"/></svg><svg class="ic"><use href="#warn"/></svg><svg class="ic"><use href="#folder"/></svg><span>10</span></div></td><td></td><td></td><td>00:33:35</td><td></td><td></td><td></td><td></td><td></td><td></td></tr>
            <tr class="purple"><td><div class="node-row"><svg><use href="#g-pass"/></svg><svg><use href="#g-tee"/></svg><svg class="ic"><use href="#warn"/></svg><svg class="ic"><use href="#opseq"/></svg><span>SEQUENTIAL_...</span></div></td><td>R5</td><td>0</td><td>00:00:17</td><td></td><td></td><td></td><td>250 m...</td><td>0 rpm</td><td></td></tr>
            <tr><td><div class="node-row"><svg><use href="#g-pass"/></svg><svg><use href="#g-end"/></svg><svg class="ic"><use href="#warn"/></svg><svg class="ic"><use href="#opseq"/></svg><span>SEQUENTIAL_...</span></div></td><td>R5</td><td>0</td><td>00:33:05</td><td></td><td></td><td></td><td>250 m...</td><td>0 rpm</td><td></td></tr>
            <tr><td><div class="node-row"><svg><use href="#g-minus"/></svg><svg class="ic"><use href="#warn"/></svg><svg class="ic"><use href="#folder"/></svg><span>20</span></div></td><td></td><td></td><td>00:02:37</td><td></td><td></td><td></td><td></td><td></td><td></td></tr>
            <tr class="selected"><td><div class="node-row"><svg><use href="#g-pass"/></svg><svg><use href="#g-end"/></svg><svg class="ic"><use href="#warn"/></svg><svg class="ic"><use href="#opface"/></svg><span>D10面铣_COPY</span></div></td><td>D10...</td><td>10</td><td>00:02:25</td><td>0.1000</td><td>0.0000</td><td>0.0000</td><td>800 m...</td><td>4000 rpm</td><td></td></tr>
            <tr><td><div class="node-row"><svg><use href="#g-tee"/></svg><svg class="ic"><use href="#ok"/></svg><svg class="ic"><use href="#folder"/></svg><span>20_COPY</span></div></td><td></td><td></td><td>00:00:00</td><td></td><td></td><td></td><td></td><td></td><td></td></tr>
            <tr><td><div class="node-row"><svg><use href="#g-tee"/></svg><svg class="ic"><use href="#ok"/></svg><svg class="ic"><use href="#folder"/></svg><span>30</span></div></td><td></td><td></td><td>00:00:00</td><td></td><td></td><td></td><td></td><td></td><td></td></tr>
            <tr><td><div class="node-row"><svg><use href="#g-tee"/></svg><svg class="ic"><use href="#ok"/></svg><svg class="ic"><use href="#folder"/></svg><span>40</span></div></td><td></td><td></td><td>00:00:00</td><td></td><td></td><td></td><td></td><td></td><td></td></tr>
            <tr><td><div class="node-row"><svg><use href="#g-tee"/></svg><svg class="ic"><use href="#ok"/></svg><svg class="ic"><use href="#folder"/></svg><span>50</span></div></td><td></td><td></td><td>00:00:00</td><td></td><td></td><td></td><td></td><td></td><td></td></tr>
            <tr><td><div class="node-row"><svg><use href="#g-tee"/></svg><svg class="ic"><use href="#ok"/></svg><svg class="ic"><use href="#folder"/></svg><span>60</span></div></td><td></td><td></td><td>00:00:00</td><td></td><td></td><td></td><td></td><td></td><td></td></tr>
            <tr><td><div class="node-row"><svg><use href="#g-tee"/></svg><svg class="ic"><use href="#ok"/></svg><svg class="ic"><use href="#folder"/></svg><span>70</span></div></td><td></td><td></td><td>00:00:00</td><td></td><td></td><td></td><td></td><td></td><td></td></tr>
            <tr><td><div class="node-row"><svg><use href="#g-tee"/></svg><svg class="ic"><use href="#ok"/></svg><svg class="ic"><use href="#folder"/></svg><span>80</span></div></td><td></td><td></td><td>00:00:00</td><td></td><td></td><td></td><td></td><td></td><td></td></tr>
            <tr><td><div class="node-row"><svg><use href="#g-tee"/></svg><svg class="ic"><use href="#ok"/></svg><svg class="ic"><use href="#folder"/></svg><span>90</span></div></td><td></td><td></td><td>00:00:00</td><td></td><td></td><td></td><td></td><td></td><td></td></tr>
            <tr><td><div class="node-row"><svg><use href="#g-tee"/></svg><svg class="ic"><use href="#ok"/></svg><svg class="ic"><use href="#folder"/></svg><span>100</span></div></td><td></td><td></td><td>00:00:00</td><td></td><td></td><td></td><td></td><td></td><td></td></tr>
            <tr><td><div class="node-row"><svg><use href="#g-end"/></svg><svg class="ic"><use href="#ok"/></svg><svg class="ic"><use href="#folder"/></svg><span>宏程序</span></div></td><td></td><td></td><td>00:00:00</td><td></td><td></td><td></td><td></td><td></td><td></td></tr>
            <tr><td></td><td></td><td></td><td></td><td></td><td></td><td></td><td></td><td></td><td></td></tr>
            <tr><td></td><td></td><td></td><td></td><td></td><td></td><td></td><td></td><td></td><td></td></tr>
            <tr><td></td><td></td><td></td><td></td><td></td><td></td><td></td><td></td><td></td><td></td></tr>
            <tr><td></td><td></td><td></td><td></td><td></td><td></td><td></td><td></td><td></td><td></td></tr>
            <tr><td></td><td></td><td></td><td></td><td></td><td></td><td></td><td></td><td></td><td></td></tr>
          </tbody>
        </table>
      </div>
      <div class="splitter"></div>
      <button class="fold">相关性<svg width="10" height="10" viewBox="0 0 10 10"><path d="M1 1L5 8L9 1" fill="none" stroke="#00678a" stroke-width="2"/></svg></button>
      <button class="fold">细节<svg width="10" height="10" viewBox="0 0 10 10"><path d="M1 1L5 8L9 1" fill="none" stroke="#00678a" stroke-width="2"/></svg></button>
    </section>

    <aside class="view-tools">
      <button class="vt on" aria-label="程序顺序视图"><svg viewBox="0 0 48 48"><path d="M2 2H18Q24 2 24 6V12Q20 8 16 14V24H2Z" fill="#dfe6fa" stroke="#3448a0"/><path d="M16 10Q18 4 24 14H32V34Q24 38 16 32Z" fill="#eef2ff" stroke="#3448a0"/><path d="M5 8H13M5 13H13M5 18H13M19 19H29M19 24H29M19 29H29" stroke="#334" stroke-width="1.600" stroke-dasharray="3 2"/><svg x="32" y="22" width="16" height="25"><use href="#nodes"/></svg></svg></button>
      <button class="vt" aria-label="机床视图"><svg viewBox="0 0 48 48"><path d="M15 1H28V22H15Z" fill="url(#gGray)" stroke="#666"/><path d="M2 21H13V28L8 38L15 44H4L1 38Z" fill="url(#gBlue)" stroke="#445"/><path d="M3 30L12 26M4 40L13 34" stroke="#fff" stroke-width="2"/><path d="M12 19L18 14H25V22L20 27H13Z" fill="#f7c869" stroke="#a67416"/><circle cx="18.500" cy="20" r="1.800" fill="#222"/><svg x="30" y="20" width="18" height="27"><use href="#nodes"/></svg></svg></button>
      <button class="vt" aria-label="几何视图"><svg viewBox="0 0 48 48"><path d="M3 7L16 1L32 6V23L20 29L3 24Z" fill="#9dabf0" stroke="#4a58a8"/><path d="M3 7L16 1L32 6L20 11Z" fill="#dfe6f2" stroke="#4a58a8"/><path d="M20 11V29L32 23V6Z" fill="#7788ea"/><path d="M5 15L11 14Q17 16 15 22L8 26Z" fill="#ffe14a" stroke="#d06010"/><circle cx="6.500" cy="20.500" r="5" fill="#ffe868" stroke="#d06010"/><svg x="32" y="21" width="16" height="26"><use href="#nodes"/></svg></svg></button>
      <button class="vt" aria-label="加工方法视图"><svg viewBox="0 0 48 48"><path d="M1 3Q10 14 21 3Q32 14 41 3V14H1Z" fill="#dbe8fa" stroke="#2e6296" stroke-width="1.400"/><path d="M1 19Q5 28 8 19Q12 28 15 19Q19 28 22 19Q26 28 29 19V30H1Z" fill="#dbe8fa" stroke="#2e6296" stroke-width="1.400"/><svg x="32" y="22" width="16" height="25"><use href="#nodes"/></svg></svg></button>
      <button class="vt" aria-label="确认刀轨"><svg viewBox="0 0 48 48"><path d="M2 33L21 22Q32 30 44 25L26 44Q14 44 2 33Z" fill="#a8c4f0" stroke="#4468a8"/><path d="M8 38Q12 28 22 26L27 28Q16 32 13 41Z" fill="#d23c1c"/><path d="M21 7H29V27Q25 30 21 27Z" fill="#5264c4" stroke="#303c84"/><path d="M21 13L29 8M21 19L29 14M21 25L29 20" stroke="#dde" stroke-width="1.500"/><path d="M1 10L6 8L9 13Q13 4 20 1L21 4Q14 9 9 20Z" fill="#2fc450" stroke="#189034" stroke-width=".7"/></svg></button>
      <button class="vt" aria-label="展开全部"><svg viewBox="0 0 48 48"><path d="M8 4V42M14 8H21M14 24H21M14 40H21" stroke="#5a6ac0"/><path d="M2 2.500H14V13.500H2ZM2 18.500H14V29.500H2ZM2 34.500H14V45.500H2Z" fill="#f2f2f2" stroke="#666"/><path d="M4 8H12M8 4V12M4 24H12M8 20V28M4 40H12M8 36V44" stroke="#222"/><path d="M24 2Q31 3 30 9H32L28 13L25 9H27Q28 5 24 4ZM24 18Q31 19 30 25H32L28 29L25 25H27Q28 21 24 20Z" fill="#ee7a24"/><rect x="25" y="31" width="7" height="15" fill="#6474c4" stroke="#3a4690"/><path d="M25 36L32 32M25 41L32 37M25 45L32 42" stroke="#ccd"/><path d="M34 34H46L42 38H35M35 42H39L41 38" fill="none" stroke="#777" stroke-width="1.200"/></svg></button>
      <button class="vt" aria-label="收缩全部"><svg viewBox="0 0 48 48"><path d="M8 4V42M14 8H21M14 24H21M14 40H21" stroke="#5a6ac0"/><path d="M2 2.500H14V13.500H2ZM2 18.500H14V29.500H2ZM2 34.500H14V45.500H2Z" fill="#f2f2f2" stroke="#666"/><path d="M4 8H12M4 24H12M4 40H12" stroke="#222"/><path d="M24 8L29 4V6Q35 7 34 13Q32 10 29 10V12ZM24 24L29 20V22Q35 23 34 29Q32 26 29 26V28Z" fill="#ee7a24"/><rect x="25" y="31" width="7" height="15" fill="#6474c4" stroke="#3a4690"/><path d="M25 36L32 32M25 41L32 37M25 45L32 42" stroke="#ccd"/><path d="M34 34H46L42 38H35M35 42H39L41 38" fill="none" stroke="#777" stroke-width="1.200"/></svg></button>
      <hr>
      <i class="caret-left"></i>
    </aside>

    <section class="view">
      <div class="view-tabs">
        <div class="view-tab"><svg width="16" height="16" viewBox="0 0 16 16"><use href="#mill"/><path d="M1 13H7M4 11V15M2 11L6 15" stroke="#ffe040"/></svg>顺序铣.prt
          <button class="plain" aria-label="窗口选项"><svg width="12" height="12" viewBox="0 0 12 12" fill="none" stroke="#fff" stroke-width="1.500"><path d="M7 1H1V11H9V9M5 4H10V7L8 9M7 1L10 4"/></svg></button>
          <button class="plain" aria-label="关闭"><svg width="10" height="10" viewBox="0 0 10 10"><path d="M1 1L9 9M9 1L1 9" stroke="#fff" stroke-width="2.200"/></svg></button>
        </div>
      </div>
      <div class="canvas">
        <dl class="info">
          <dt class="magenta" lang="zh-TW">燕秀软件：</dt><dd class="magenta">免费使用</dd>
          <dt class="magenta" lang="zh-TW">「设置」</dt><dd></dd>
          <dt lang="zh-TW">程序组：</dt><dd>NC_PROGRAM</dd>
          <dt lang="zh-TW">刀路名称：</dt><dd>D10面铣_COPY</dd>
          <dt lang="zh-TW">刀路坐标：</dt><dd>MCS_MILL10</dd>
          <dt class="magenta" lang="zh-TW">几何体层：</dt><dd></dd>
          <dt class="red" lang="zh-TW">刀具名称：</dt><dd class="red">D10精刀</dd>
          <dt class="red" lang="zh-TW">真实刀名：</dt><dd class="red">D10</dd>
          <dt class="red" lang="zh-TW">刀具编号：</dt><dd class="red">T10</dd>
          <dt class="red" lang="zh-TW">刀具直径：</dt><dd class="red">10</dd>
          <dt lang="zh-TW">刀具圆角：</dt><dd>0</dd>
          <dt lang="zh-TW">刀具类型：</dt><dd>平底刀</dd>
          <dt class="red" lang="zh-TW">刀具补正：</dt><dd></dd>
          <dt lang="zh-TW">进退刀：</dt><dd>螺旋,圆弧</dd>
          <dt class="red" lang="zh-TW">-Z取坐标：</dt><dd></dd>
          <dt class="red" lang="zh-TW">-Z取模型：</dt><dd></dd>
          <dt class="red" lang="zh-TW">最短刀长：</dt><dd></dd>
          <dt lang="zh-TW">刀头名称：</dt><dd></dd>
          <dt lang="zh-TW">内公差：</dt><dd>0.003</dd>
          <dt lang="zh-TW">外公差：</dt><dd>0.003</dd>
          <dt lang="zh-TW">侧面余量：</dt><dd>0.1</dd>
          <dt lang="zh-TW">底面余量：</dt><dd>0</dd>
          <dt lang="zh-TW">转速：</dt><dd>2700</dd>
          <dt lang="zh-TW">进给：</dt><dd>500</dd>
          <dt lang="zh-TW">行距：</dt><dd>50%</dd>
          <dt class="red" lang="zh-TW">下刀量：</dt><dd></dd>
          <dt lang="zh-TW">加工时间：</dt><dd>00:00:00</dd>
        </dl>

        <svg class="part" viewBox="0 0 1080 1020">
          <rect x="138" y="97" width="829" height="825" fill="#b5a15a"/>
          <path d="M326 250H832L775 277H337Z" fill="#463c22"/>
          <path d="M326 250L337 277V922H326Z" fill="#6f6137"/>
          <path d="M775 277L832 250L837 922H779Z" fill="#7d6d3c"/>
          <path d="M337 277H775M337 277V922H837" fill="none" stroke="#8a7842" stroke-width="3"/>
          <g fill="none" stroke="#0ff" stroke-width="8">
            <path d="M365 965H97V56H1007V965H797V766H794V401H790V290H365Z"/>
            <path d="M182 140H922V883H878V575H874V290Q868 210 790 209H360Q290 215 281 288V883H182Z"/>
            <path d="M221 182H303Q243 222 239 290V841H221Z"/>
            <path d="M848 182H884V206Z"/>
          </g>
          <path d="M138 95H965V920H840L833 290Q825 250 790 246H365Q328 252 325 290V920H142V98" fill="none" stroke="#0ff" stroke-width="4"/>
          <path d="M138 924V98H967V924H837L832 249H321V924Z" fill="none" stroke="#ff8080" stroke-width="5"/>
          <path d="M323 924H835" stroke="#b5a15a" stroke-width="6"/>
          <path d="M323 927H835" stroke="#242529" stroke-width="8"/>
          <path d="M365 900V965M797 900V965" stroke="#0ff" stroke-width="8"/>
          <g fill="none" stroke="#ff8080" stroke-width="4">
            <path d="M555 100L578 118M550 230L573 247M202 903L226 921M874 905L898 921M302 614L318 592M837 583L853 560M945 539L963 514M142 507L158 485"/>
            <circle cx="832" cy="248" r="16"/>
          </g>
          <path d="M132 187H146V236H132ZM130 348H148V380H134Z" fill="#e06868" opacity=".8"/>
          <path d="M132 88H148V106H132Z" fill="#0638e8"/>
          <path d="M236 92H276M390 92H416" stroke="#2fae2f" stroke-width="5"/>
          <path d="M218 103H282M390 104H422" stroke="#4c7060" stroke-width="4"/>
          <path d="M54 469H185Q218 475 221 510" fill="none" stroke="#ffd0e4" stroke-width="8"/>
          <path d="M102 511H217M832 214L848 182" stroke="#0f0" stroke-width="8"/>
          <path d="M57 551Q92 549 98 514" fill="none" stroke="#ffc400" stroke-width="8"/>
          <text x="140" y="96" fill="#1448ff">ZM</text>
          <text x="266" y="83" fill="#2f9e3c">YC</text>
          <text x="404" y="83" fill="#2f9e3c">YM</text>
          <text x="152" y="299" fill="#c0392b">XC</text>
          <text x="152" y="443" fill="#c0392b">XM</text>
        </svg>

        <svg class="triad" viewBox="0 0 210 210">
          <rect x="30" y="33" width="79" height="78" fill="#a3a3a3" stroke="#c8c8c8" stroke-width="2"/>
          <path d="M30 33H130" stroke="#35b035" stroke-width="4"/><path d="M128 26L164 33L128 40Z" fill="#2f9e3c"/>
          <path d="M28 33V136" stroke="#c01818" stroke-width="5"/><path d="M20 132H40L31 168Z" fill="#c83030"/>
          <circle cx="28" cy="33" r="12" fill="#bbb"/><rect x="22" y="22" width="18" height="22" fill="#0a3ce8"/>
          <text x="168" y="48" fill="#2f9e3c">Y</text>
          <text x="20" y="192" fill="#c0302b">X</text>
        </svg>
      </div>
    </section>
  </main>

  <footer class="statusbar">
    <svg width="16" height="16"><use href="#fit"/></svg>
  </footer>

  <footer class="taskbar">
    <button class="start" aria-label="开始"><svg width="18" height="18" viewBox="0 0 18 18"><path d="M0 2.500L7.500 1.500V8.500H0ZM8.500 1.300L18 0V8.500H8.500ZM0 9.500H7.500V16.500L0 15.500ZM8.500 9.500H18V18L8.500 16.700Z" fill="#fff"/></svg></button>
    <label class="search">
      <svg width="18" height="18" viewBox="0 0 18 18" fill="none" stroke="#222" stroke-width="1.500"><circle cx="11" cy="7" r="5.500"/><path d="M7 11L1 17"/></svg>
      <input type="text" placeholder="搜索" aria-label="搜索">
      <svg class="dolphins" width="80" height="38" viewBox="0 0 80 38"><path d="M0 38Q4 25 20 26Q40 24 50 27Q68 24 80 30V38Z" fill="#4cb8d8"/><path d="M4 34Q14 24 26 32T48 33T80 34V38H3Z" fill="#2b8fb8"/><path d="M5 31L10 29L14 33L20 29L22 34H7Z" fill="#e8f8ff"/><path d="M12 25Q14 10 24 4L24 1Q28 1 30 4Q40 4 46 13Q38 13 34 12Q22 12 18 25L21 27L13 28L9 24Z" fill="#6680b8"/><path d="M46 13Q36 16 34 12Z" fill="#dce6f8"/><path d="M29 29Q42 22 54 24Q66 24 67 14Q58 13 60 7Q66 6 69 11Q71 6 78 6Q77 14 70 15Q72 26 62 33Q58 38 54 32Q40 36 29 29Z" fill="#48507c"/><path d="M30 30Q42 36 54 33Q44 38 34 34Z" fill="#b8c4e0"/></svg>
    </label>
    <button class="app" aria-label="任务视图"><svg width="18" height="18" viewBox="0 0 18 18" fill="none" stroke="#fff" stroke-width="1.300"><path d="M1 5H11V13H1ZM1 2V.5M11 2V.5M1 2H11M1 16H11M1 16V18M11 16V18M15.500 0V5M15.500 13V18"/><rect x="14.500" y="7.500" width="2" height="3" fill="#fff"/></svg></button>
    <button class="app open" aria-label="文件资源管理器"><svg width="24" height="24" viewBox="0 0 24 24"><path d="M1 3H9L11 5H23V21H1Z" fill="#f8ce58"/><path d="M1 3H9L11 5V7H1Z" fill="#e0a020"/><path d="M5 21V13H19V21H15V17H9V21Z" fill="#3c90e0"/></svg></button>
    <button class="app open" aria-label="Edge"><svg width="24" height="24" viewBox="0 0 24 24"><path d="M1 10Q3 0 13 .5Q23 2 23.500 10Q23 15 17 15.500Q13 15 15 12Q15 8 10 8Q4 7 1 10Z" fill="#48cc88"/><path d="M1 10Q4 1 12 .6Q6 3 5 9Z" fill="#38b4d8"/><path d="M.5 12Q2 6 8 7Q12 7 14 9Q8 9 8.500 15Q11 20 17 19.500Q20 19 22 18Q18 24 11 23.500Q1 22 .5 12Z" fill="#1b78c8"/><path d="M8.500 13Q8 21 17 20Q20 20 22 18Q19 23 13 23.500Q4 20 8.500 13Z" fill="#0f58a8"/></svg></button>
    <button class="app open" aria-label="QQ"><svg width="24" height="24" viewBox="0 0 24 24"><rect width="24" height="24" rx="4" fill="#fff"/><ellipse cx="12" cy="14" rx="7" ry="7" fill="#111"/><ellipse cx="12" cy="7.500" rx="5" ry="5.500" fill="#111"/><ellipse cx="12" cy="15.500" rx="4.500" ry="5" fill="#fff"/><circle cx="10" cy="6" r="1.400" fill="#fff"/><circle cx="14" cy="6" r="1.400" fill="#fff"/><ellipse cx="12" cy="9" rx="3" ry="1.100" fill="#f5a418"/><path d="M6 11Q12 14 18 11V13Q12 16 10 14V18L7 17V14Z" fill="#e21c1c"/><path d="M6 21H11V22.500H6ZM13 21H18V22.500H13Z" fill="#f5a418"/></svg></button>
    <button class="app open" aria-label="记事本"><svg width="24" height="24" viewBox="0 0 24 24"><path d="M8 3L20 2L17 20L1 18Z" fill="#9ed4de"/><path d="M8 3L20 2L19 7L7 7Z" fill="#d6eef2"/><path d="M20 2L22 3L23 20L17 22Z" fill="#4e7c88"/><path d="M1 18L17 20V22L2 20Z" fill="#f4f8f8"/></svg></button>
    <button class="app open focus" aria-label="NX"><svg width="26" height="26" viewBox="0 0 26 26"><circle cx="12" cy="15" r="9" fill="#189cd0"/><path d="M4 12Q6 19 14 22Q8 25 4 20Z" fill="#30c030"/><path d="M3 24Q19 22 22 10L18 10Q24 3 25 10Q25 22 8 26Z" fill="#f4b818"/><path d="M4 2L13 0L11 13Z" fill="#d81830"/><path d="M13 0L16 3L11 13Z" fill="#8c0c20"/></svg></button>
    <div class="tray">
      <button class="weather"><svg width="24" height="26" viewBox="0 0 24 26"><path d="M10 1Q16 9 5 13L2 10Q10 9 10 1Z" fill="#f5a623"/><path d="M4 25Q-1 23 1 18Q4 14 8 15Q12 8 18 13Q24 14 23.500 20Q23 24 20 25Z" fill="#a9c8f8"/><path d="M4 25Q-1 23 1 18Q12 24 23.500 20Q23 24 20 25Z" fill="#dce9ff"/><circle cx="17.500" cy="6" r="6" fill="#c42b1c"/><path d="M16 4.500L18 3V9" fill="none" stroke="#fff" stroke-width="1.200"/></svg><span>26°C</span><span>多云</span></button>
      <div class="tray-icons">
        <svg width="14" height="12" viewBox="0 0 14 12" fill="none" stroke="#fff" stroke-width="1.300"><path d="M1 8L7 2L13 8"/></svg>
        <svg width="18" height="16" viewBox="0 0 18 16" fill="none" stroke="#fff" stroke-width="1.200"><path d="M6 3H17V12H3V7M10 12V15M7 15H13"/><rect x="1" y="1" width="4" height="5"/></svg>
        <svg width="18" height="16" viewBox="0 0 18 16" fill="none" stroke="#fff" stroke-width="1.200"><path d="M1 5H4L8 2V14L4 11H1ZM11 5Q13 8 11 11M13 3Q16 8 13 13"/></svg>
        <span>中</span>
      </div>
      <div class="clock"><span>22:45</span><span>2025/7/23</span></div>
      <button class="notify" aria-label="通知"><svg width="26" height="26" viewBox="0 0 26 26"><path d="M1 1H17V14H11L7 18V14H1Z" fill="#fff"/><path d="M4 5H14M4 8H14M4 11H10" stroke="#1c2c34"/><circle cx="17" cy="17" r="8" fill="#33414a" stroke="#9aa4aa"/><path d="M15 13.500Q20 13 18 16.500Q21 20 15 20.500" fill="none" stroke="#fff" stroke-width="1.400"/></svg></button>
      <span class="peek"></span>
    </div>
    <span class="watermark">UG爱好者论坛-WWW.UGSNX.COM</span>
  </footer>

  <!-- operation context menu -->
  <div class="context-menu" role="menu">
    <button class="item strong"><svg viewBox="0 0 16 16"><use href="#mill"/><path d="M7 8Q8 12 11 11L14 15" fill="none" stroke="#e0a010" stroke-width="2"/></svg>编辑...</button>
    <button class="item"><svg viewBox="0 0 16 16"><use href="#mill"/><path d="M7 8L14 12M7 13L14 8" stroke="#555" stroke-width="1.300"/><circle cx="7" cy="13" r="1.500" fill="none" stroke="#b89800"/></svg>剪切</button>
    <button class="item"><svg viewBox="0 0 16 16"><use href="#mill"/><path d="M6 7H11V13H6ZM9 9H14V15H9Z" fill="#eef" stroke="#2c3cc0"/></svg>复制</button>
    <button class="item"><svg viewBox="0 0 16 16"><use href="#mill"/><path d="M7 7L15 15M15 7L7 15" stroke="#222" stroke-width="1.500"/></svg>删除</button>
    <button class="item"><svg viewBox="0 0 16 16"><use href="#mill"/><path d="M8 8L12 3L14 5L10 10Z" fill="#f5b020" stroke="#c23"/><rect x="5.500" y="11" width="10" height="4" fill="#fff" stroke="#1c1c90"/><path d="M7 13H14" stroke="#222" stroke-dasharray="1.500 1"/></svg>重命名</button>
    <hr>
    <button class="item"><svg viewBox="0 0 16 16"><use href="#mill"/><path d="M1 13H7M4 11V15M2 11L6 15" stroke="#e8b810"/></svg>生成</button>
    <button class="item"><svg viewBox="0 0 16 16"><use href="#mill"/><path d="M1 13H5" stroke="#e8b810" stroke-width="2"/><rect x="7.500" y="8.500" width="8" height="6" fill="#bfe0f8" stroke="#335"/></svg>并行生成</button>
    <button class="item"><svg viewBox="0 0 16 16" fill="none"><path d="M6 1.500H2V5.500H5M6 8.500H2M5 5.500V8.500M2 8.500V12.500H6" stroke="#555"/><path d="M7 13Q8 8 12 9Q15 10 14 13M12 12L14 14L16 11" stroke="#18206c" stroke-width="1.700"/></svg>重播</button>
    <hr>
    <button class="item"><svg viewBox="0 0 16 16"><use href="#mill"/><path d="M1 12L5 14L3 15" stroke="#e04010" fill="none"/><path d="M7 5H10V9H7ZM12 5H15V9H12ZM8 11L11 9L14 12L11 15Z" fill="#ddd" stroke="#444"/></svg>后处理</button>
    <hr>
    <button class="item sub"><svg viewBox="0 0 16 16"></svg>插入<i class="caret-right"></i></button>
    <hr>
    <button class="item sub"><svg viewBox="0 0 16 16"></svg>对象<i class="caret-right"></i></button>
    <hr>
    <button class="item sub"><svg viewBox="0 0 16 16"></svg>刀轨<i class="caret-right"></i></button>
    <hr>
    <button class="item sub"><svg viewBox="0 0 16 16"></svg>工件<i class="caret-right"></i></button>
    <hr>
    <button class="item"><svg viewBox="0 0 16 16"><use href="#mill"/><path d="M3 13H11M3 15H9" stroke="#d22"/><path d="M9 12L13 6L15 8L11 13Z" fill="#f5b020" stroke="#844"/></svg>注释</button>
    <hr>
    <button class="item sub"><svg viewBox="0 0 16 16"></svg>工作指导<i class="caret-right"></i></button>
    <hr>
    <button class="item"><svg viewBox="0 0 16 16"><use href="#mill"/><rect x="6.500" y="5.500" width="8" height="9" fill="#eef" stroke="#88a"/><path d="M9 9H11V13M9 13H13M10 6.500V8" stroke="#1c1c90" stroke-width="1.500" fill="none"/></svg>信息</button>
    <button class="item"><svg viewBox="0 0 16 16"><use href="#mill"/><rect x="6.500" y="5.500" width="8.500" height="9.500" fill="#f2f2ff" stroke="#5560d0"/><path d="M8 9H10M11.500 9H13.500M8 12H10M11.500 12H13.500" stroke="#334" stroke-width="1.300"/></svg>属性</button>
  </div>
  <div class="highlight"></div>

  <button class="upload">
    <span class="upload-icon"><svg width="22" height="22" viewBox="0 0 22 22" fill="none" stroke="#fff" stroke-width="2.800"><circle cx="11" cy="6" r="3.500"/><circle cx="6" cy="14" r="4"/><circle cx="16" cy="14" r="4"/></svg></span>
    <span class="upload-text">拖拽至此上传</span>
  </button>

</body>
</html>
```

FILE: styles.css
```css
* {
  box-sizing: border-box;
}

body {
  margin: 0;
  height: 100vh;
  display: flex;
  flex-direction: column;
  overflow: hidden;
  position: relative;
  font-family: "Noto Sans", "Noto Sans CJK SC", sans-serif;
  font-size: 11px;
  color: #111;
  background-color: #fff;
}

button, input, select {
  font: inherit;
  color: inherit;
}

button {
  display: flex;
  align-items: center;
  padding: 0;
  border: none;
  background: none;
  white-space: nowrap;
  cursor: pointer;
}

h1, h2 {
  margin: 0;
  font-weight: normal;
  font-size: 12px;
}

svg {
  display: block;
  flex-shrink: 0;
}

.sprite {
  position: absolute;
}

.caret {
  flex-shrink: 0;
  border: 3px solid transparent;
  border-top: 4px solid #111;
  border-bottom: none;
}

.sep {
  flex-shrink: 0;
  width: 1px;
  align-self: stretch;
  background-color: #d4d4d4;
}

/* title bar */
.titlebar {
  flex-shrink: 0;
  height: 26px;
  display: flex;
  align-items: center;
  gap: 6px;
  padding: 0 8px 2px 4px;
}

.titlebar .sep {
  height: 18px;
  align-self: center;
}

.nx-logo {
  width: 32px;
  font-family: "Liberation Sans", Arial, sans-serif;
  font-weight: bold;
  font-size: 22px;
  line-height: 22px;
  color: #8497a8;
}

.titlebar .nx-logo + .sep {
  margin-right: 2px;
}

.menu-btn {
  gap: 4px;
}

.menu-btn.wide {
  gap: 10px;
}

.more {
  flex-direction: column;
  gap: 2px;
}

.more .bar {
  width: 6px;
  height: 1px;
  background-color: #111;
}

.app-title {
  flex: 1;
  text-align: center;
}

.brand {
  font-family: "Liberation Sans", Arial, sans-serif;
  font-weight: bold;
  font-size: 13px;
  color: #009999;
}

.win-btns {
  display: flex;
  gap: 10px;
  padding-left: 18px;
}

/* ribbon tabs */
.tabs {
  flex-shrink: 0;
  height: 28px;
  display: flex;
  background-color: #dbdbdb;
}

.tab {
  padding: 0 13px 2px;
  font-size: 13px;
}

.tab.file {
  padding: 0 20px 2px;
  margin-right: 1px;
  background-color: #54a0b8;
  color: #fff;
}

.tab.active {
  background-color: #fff;
  border-top: 1px solid #999;
  color: #00678a;
}

.tab-tools {
  margin-left: auto;
  display: flex;
  align-items: center;
  gap: 11px;
  padding: 0 9px 2px 0;
}

.finder {
  width: 125px;
  height: 20px;
  margin-right: 2px;
  display: flex;
  align-items: center;
  background-color: #fff;
  border: 1px solid #999;
}

.finder input {
  flex: 1;
  min-width: 0;
  border: none;
  outline: none;
  padding: 0 2px;
}

.finder input::placeholder {
  color: #999;
}

.tutorial {
  gap: 4px;
}

/* ribbon */
.ribbon {
  flex-shrink: 0;
  height: 94px;
  display: flex;
  align-items: flex-start;
  gap: 8px;
  padding: 5px 5px 4px 10px;
  border-bottom: 1px solid #d4d4d4;
}

.cmd {
  min-width: 35px;
  flex-direction: column;
  line-height: 16px;
  gap: 5px;
}

.cmd svg {
  width: 28px;
  height: 28px;
  margin: 2px 0;
}

.cmd .pic {
  width: 30px;
}

.cmd .blank {
  width: 32px;
  height: 32px;
  border: 1px solid #888;
}

.corner {
  margin-left: auto;
  align-self: flex-end;
}

.ribbon .corner {
  margin-bottom: 4px;
}

/* toolbar */
.toolbar {
  flex-shrink: 0;
  height: 48px;
  display: flex;
  align-items: center;
  gap: 8px;
  padding: 4px 5px 4px 10px;
  border-bottom: 1px solid #7f8f90;
}

.toolbar .spaced {
  margin: 0 4px;
}

.toggle {
  height: 30px;
  padding: 0 2px;
  border: 1px solid transparent;
}

.toggle + .toggle {
  margin-left: -8px;
}

.toggle.on {
  background-color: #cde6eb;
  border-color: #a8d2dc;
}

.toolbar select {
  height: 21px;
  padding: 0 2px;
  border: 1px solid #999;
  border-radius: 0;
  appearance: none;
  background: linear-gradient(45deg, transparent 50%, #111 50%) right 9px center / 4px 4px no-repeat, linear-gradient(-45deg, transparent 50%, #111 50%) right 5px center / 4px 4px no-repeat, #fff;
}

.filter {
  width: 133px;
}

.scope {
  width: 172px;
}

.split {
  display: flex;
  align-items: center;
  gap: 7px;
}

.stack {
  display: flex;
  flex-direction: column;
  gap: 6px;
}

.text-btn {
  gap: 4px;
}

.text-btn:disabled {
  color: #b4b4b4;
}

.text-tools {
  align-self: stretch;
  display: flex;
  align-items: center;
  gap: 10px;
}

/* workspace */
.workspace {
  flex: 1;
  min-height: 0;
  display: flex;
  border-bottom: 1px solid #999;
}

.resource-bar {
  flex-shrink: 0;
  width: 32px;
  background-color: #dbdbdb;
  border-right: 1px solid #999;
}

.gear {
  margin: 4px 0 21px 7px;
}

.res {
  width: 31px;
  height: 42px;
  justify-content: center;
  padding-left: 4px;
}

.res svg {
  width: 24px;
  height: 24px;
}

.res.far {
  margin-top: 12px;
}

.res.current {
  width: 30px;
  height: 46px;
  margin: 0 -1px -4px 2px;
  padding: 0 0 0 2px;
  background-color: #fff;
  border: 1px solid #999;
  border-right: none;
  box-shadow: 1px 0 #fff;
}

.navigator {
  flex-shrink: 0;
  width: 699px;
  padding: 0 9px 6px 6px;
  display: flex;
  flex-direction: column;
  border-right: 1px solid #7f8f90;
}

.nav-head {
  height: 28px;
  display: flex;
  align-items: center;
  justify-content: space-between;
  padding: 0 7px 0 4px;
}

.table-wrap {
  flex: 1;
  min-height: 0;
  overflow: hidden;
  border: 1px solid #d4d4d4;
}

.ops {
  width: 100%;
  table-layout: fixed;
  border-collapse: separate;
  border-spacing: 0;
  font-size: 12px;
}

.c-name { width: 175px; }
.c-tool { width: 45px; }
.c-num { width: 42px; }
.c-time { width: 72px; }
.c-stock { width: 56px; }
.c-floor { width: 71px; }
.c-depth { width: 65px; }
.c-feed { width: 62px; }
.c-speed { width: 74px; }

.ops th {
  height: 22px;
  padding: 0 6px;
  text-align: left;
  font-weight: normal;
  white-space: nowrap;
  background-color: #f0f0f0;
  border-right: 1px solid #d0d0d0;
  border-bottom: 1px solid #d0d0d0;
}

.ops td {
  height: 20px;
  padding: 0 0 0 4px;
  line-height: 19px;
  white-space: nowrap;
  border-right: 1px solid #e8e8e8;
  border-bottom: 1px solid #e8e8e8;
}

.ops tbody tr:nth-child(even) {
  background-color: #f9f9f9;
}

.ops td:first-child {
  padding-left: 1px;
  border-right-color: #000;
}

.ops td.root {
  padding-left: 4px;
}

.node-row {
  height: 19px;
  display: flex;
  align-items: center;
  overflow: hidden;
}

.node-row svg {
  width: 19px;
  height: 20px;
}

.node-row .ic {
  width: 16px;
  height: 16px;
}

.node-row span {
  flex: 1;
  padding-left: 3px;
}

.dots {
  fill: none;
  stroke: #888;
  stroke-dasharray: 1 1;
}

.box {
  fill: #fff;
  stroke: #bbb;
}

.sign {
  stroke: #000;
}

.node {
  fill: #f6f08c;
  stroke: #2222a8;
}

.ops .purple {
  color: #7030d0;
}

.selected td:not(:first-child):not(:last-child),
.selected .node-row span {
  background-color: #8ec1d1;
}

.splitter {
  height: 6px;
  border: 1px solid #aaa;
  background-color: #dbdbdb;
}

.fold {
  height: 24px;
  justify-content: space-between;
  padding: 0 7px;
  font-size: 13px;
  color: #00678a;
  border-bottom: 2px solid #d4d4d4;
}

.view-tools {
  flex-shrink: 0;
  width: 59px;
  padding: 7px 2px;
  display: flex;
  flex-direction: column;
  gap: 2px;
  border-right: 1px solid #d4d4d4;
}

.vt {
  height: 55px;
  justify-content: center;
  border: 1px solid transparent;
}

/* direct child only, the node tree inside keeps its own size */
.vt > svg {
  width: 48px;
  height: 48px;
}

.vt.on {
  background-color: #cde6eb;
  border-color: #a8d2dc;
}

.view-tools hr {
  width: 50px;
  margin: 2px auto;
  border: none;
  border-top: 1px solid #d4d4d4;
}

.caret-left {
  width: 0;
  margin: auto 0 0 6px;
  border: 3px solid transparent;
  border-right: 4px solid #111;
  border-left: none;
}

/* graphics view */
.view {
  flex: 1;
  min-width: 0;
  display: flex;
  flex-direction: column;
}

.view-tabs {
  height: 23px;
  display: flex;
  border-bottom: 2px solid #54a0b8;
}

.view-tab {
  display: flex;
  align-items: center;
  gap: 6px;
  padding: 0 6px 0 4px;
  font-size: 12px;
  color: #fff;
  background-color: #54a0b8;
}

.canvas {
  flex: 1;
  position: relative;
  background-color: #242529;
}

.info {
  width: max-content;
  margin: 0;
  padding: 1px 5px;
  display: grid;
  grid-template-columns: 80px auto;
  column-gap: 9px;
  line-height: 21px;
  color: #0c9484;
}

.info dt {
  height: 21px;
  text-align: right;
  white-space: nowrap;
  font-family: "Noto Sans", "Noto Sans CJK TC", sans-serif;
  font-size: 16px;
}

.info dd {
  height: 21px;
  margin: 0;
  font-size: 15px;
}

.info .magenta {
  color: #f0f;
}

.info .red {
  color: #f00;
}

.part {
  position: absolute;
  left: 310px;
  top: 291px;
  width: 360px;
  height: 340px;
  font-size: 38px;
}

.triad {
  position: absolute;
  left: 54px;
  top: 721px;
  width: 70px;
  height: 70px;
  font-size: 38px;
}

/* bottom bars */
.statusbar {
  flex-shrink: 0;
  height: 21px;
  padding: 2px 55px;
  display: flex;
  justify-content: flex-end;
}

.taskbar {
  flex-shrink: 0;
  height: 40px;
  display: flex;
  position: relative;
  font-size: 14px;
  color: #fff;
  background: linear-gradient(90deg, #1f333d, #24363d 35%, #2f3130 60%, #2b302f 70%, #1c2c34);
}

.start {
  width: 48px;
  justify-content: center;
}

.search {
  width: 288px;
  display: flex;
  align-items: center;
  padding-left: 11px;
  background-color: #f0f0f0;
  border: 1px solid #bbb;
}

.search input {
  flex: 1;
  min-width: 0;
  padding: 0 0 0 9px;
  border: none;
  outline: none;
  background: none;
}

.search input::placeholder {
  color: #222;
}

.search .dolphins {
  align-self: flex-end;
}

.app {
  width: 49px;
  justify-content: center;
  position: relative;
}

.app.open::after {
  content: "";
  position: absolute;
  left: 5px;
  right: 5px;
  bottom: 0;
  height: 2px;
  background-color: #76b9ed;
}

.app.focus {
  background-color: #54626a;
}

.app.focus::after {
  left: 0;
  right: 0;
}

.tray {
  margin-left: auto;
  display: flex;
  align-items: center;
  gap: 10px;
}

.weather {
  gap: 8px;
  margin-right: 12px;
}

.tray-icons {
  display: flex;
  align-items: center;
  gap: 7px;
}

.tray-icons span {
  font-size: 16px;
}

.clock {
  width: 68px;
  display: flex;
  flex-direction: column;
  align-items: center;
  font-size: 12px;
  line-height: 18px;
}

.peek {
  width: 5px;
  align-self: stretch;
  border-left: 1px solid #7c878c;
}

.watermark {
  position: absolute;
  right: 6px;
  bottom: 4px;
  font-family: "Liberation Mono", "Noto Sans CJK SC", monospace;
  font-size: 14px;
  line-height: 18px;
  color: rgba(225, 225, 225, 0.7);
}

/* overlays */
.context-menu {
  position: absolute;
  left: 405px;
  top: 157px;
  width: 104px;
  padding: 2px;
  background-color: #fff;
  border: 1px solid #999;
  box-shadow: 3px 3px 3px rgba(0, 0, 0, 0.4);
}

.context-menu .item {
  width: 100%;
  height: 24px;
  gap: 8px;
  padding: 0 5px;
}

.context-menu .strong {
  font-weight: bold;
}

.context-menu svg {
  width: 16px;
  height: 16px;
}

.context-menu hr {
  height: 1px;
  margin: 4px 10px;
  border: none;
  background-color: #d4d4d4;
}

.caret-right {
  margin-left: auto;
  border: 3px solid transparent;
  border-left: 4px solid #111;
  border-right: none;
}

.highlight {
  position: absolute;
  left: 393px;
  top: 357px;
  width: 130px;
  height: 40px;
  border: 3px solid #f9504e;
  pointer-events: none;
}

.upload {
  position: absolute;
  right: 170px;
  top: 112px;
  width: 130px;
  height: 38px;
  border: 1px solid #0b96ff;
  border-radius: 6px;
  overflow: hidden;
  background-color: #f0f8ff;
}

.upload-icon {
  width: 36px;
  height: 100%;
  display: flex;
  align-items: center;
  justify-content: center;
  border-radius: 5px;
  background: linear-gradient(45deg, #36b4ff, #0090ff 70%);
}

.upload-text {
  padding-left: 7px;
  font-size: 13px;
  font-weight: bold;
  color: #06a0ff;
}
```
